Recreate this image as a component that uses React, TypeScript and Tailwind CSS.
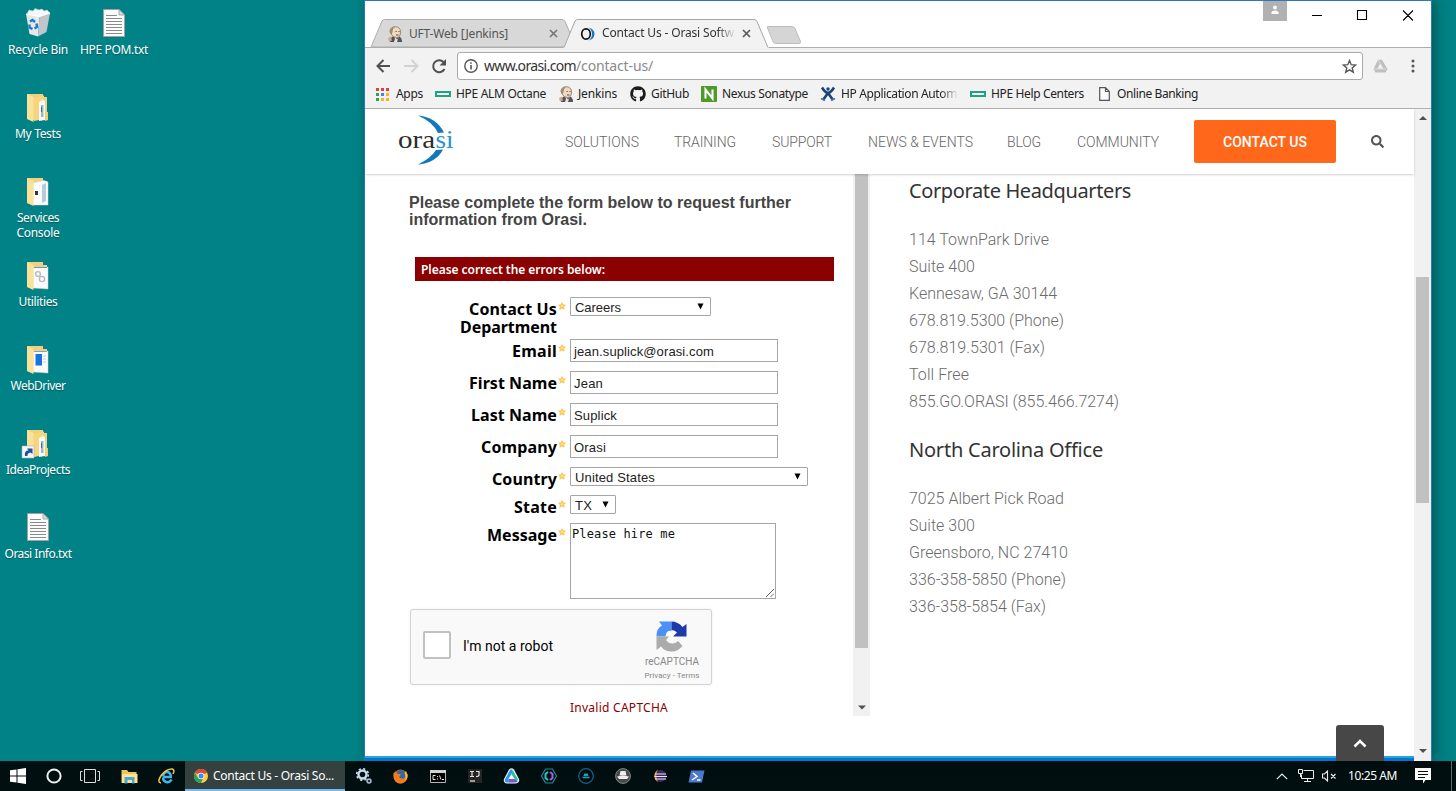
import { useLayoutEffect, useRef } from "react";
import type { ReactNode } from "react";
import { FaGithub, FaSearch } from "react-icons/fa";

/** A single line of text, tracked so that it spans exactly `w` pixels. */
function Line({ w, className = "", children }: { w: number; className?: string; children: string }) {
  const ref = useRef<HTMLSpanElement>(null);
  useLayoutEffect(() => {
    const fit = () => {
      const el = ref.current;
      if (!el) return;
      el.style.letterSpacing = "0px";
      const natural = el.getBoundingClientRect().width;
      el.style.letterSpacing = `${(w - natural) / children.length}px`;
    };
    fit();
    document.fonts.ready.then(fit);
  }, [w, children]);
  return (
    <span ref={ref} className={`inline-block whitespace-pre ${className}`}>
      {children}
    </span>
  );
}

/* ---------- desktop icons ---------- */

function TextFile() {
  return (
    <svg width="22" height="28" viewBox="0 0 22 28">
      <path d="M.5 .5H16L21.500 6V27.500H.5Z" fill="#fdfdfd" stroke="#a8a09c" />
      <path d="M16 .5V6H21.500Z" fill="#dedede" stroke="#999" strokeWidth=".8" />
      <path d="M3 6.500H14M3 9.500H19M3 12.500H19M3 15.500H19M3 18.500H19M3 21.500H19M3 24.500H19" stroke="#8a8a8a" />
    </svg>
  );
}

function RecycleBin() {
  return (
    <svg width="26" height="29" viewBox="0 0 26 29">
      <path d="M2 6L4 2L8 3L10 .5L14 2L17 1L19 3L22 2L25 5L22 9L4 10Z" fill="#f5f7f8" stroke="#c4cdd2" strokeWidth=".6" />
      <path d="M1 6L4.500 26L13 28.500L14.500 8.500Z" fill="#e4e8ea" />
      <path d="M14.500 8.500L13 28.500L21.500 24L25 5Z" fill="#bfc5ca" />
      <path d="M1 6L14.500 8.500L25 5" fill="none" stroke="#fff" strokeWidth="1.200" />
      <path d="M5 13.500L7.500 12L10 14M11.500 15.500L12 19L9.500 20.500M7.500 21L4.500 19.500L4.500 16.500" fill="none" stroke="#1f78c8" strokeWidth="2.400" />
    </svg>
  );
}

function Folder({ kind }: { kind: "files" | "console" | "gears" | "web" | "link" }) {
  return (
    <svg className="relative -left-px top-px" width="32" height="30" viewBox="0 0 32 30">
      <path d="M6 1H22V4H26V27H12L6 26Z" fill="#eed283" />
      {(kind === "files" || kind === "link") && (
        <>
          <path d="M13 5L23 2.500V26L13 28Z" fill="#f5d67c" />
          <path d="M18 9L22 7L24 8V27L18 28Z" fill="#f6fafc" />
          <path d="M20 12H22.500V24H20Z" fill="#9db9cf" />
          <path d="M20.500 14V19" stroke="#456b92" />
          <path d="M24 19H27V27L24 28Z" fill="#f2cf6d" />
        </>
      )}
      {kind === "console" && (
        <>
          <path d="M12 6L23 3.500L27 5V28H12Z" fill="#fdfdfd" stroke="#d2d2d2" strokeWidth=".5" />
          <path d="M21 8L25 6V24L21 26Z" fill="#b9cbd8" />
          <path d="M14 14H17V18H14Z" fill="#30353a" />
        </>
      )}
      {kind === "gears" && (
        <>
          <path d="M12 6H27V28L12 27Z" fill="#fafafa" stroke="#ccc" strokeWidth=".5" />
          <path d="M13 6.500H26" stroke="#7891ad" />
          <circle cx="17" cy="13" r="2.400" fill="none" stroke="#b5bbc2" strokeWidth="1.400" />
          <circle cx="21" cy="18" r="2.600" fill="none" stroke="#b5bbc2" strokeWidth="1.400" />
        </>
      )}
      {kind === "web" && (
        <>
          <path d="M12 6H27V28L12 27Z" fill="#fafafa" stroke="#ccc" strokeWidth=".5" />
          <path d="M13 6.500H26" stroke="#8ca0b4" />
          <path d="M14.500 9H21V20.500H14.500Z" fill="#1475df" />
          <path d="M22 11H25M22 14H25M22 17H25" stroke="#c5cdd6" />
        </>
      )}
      <path d="M6 1L12.500 4V29L6 26Z" fill="#fbe299" />
      {kind === "link" && (
        <>
          <path d="M1 17H13V29H1Z" fill="#f4f7fa" stroke="#a9b6c2" strokeWidth=".6" />
          <path d="M4 27Q3 21.500 7.500 21.500L6 19.500H11.500V25L9.500 23.500Q6 24 6.500 27Z" fill="#234f94" />
        </>
      )}
    </svg>
  );
}

function DesktopItem({ icon, lines }: { icon: ReactNode; lines: [string, number][] }) {
  return (
    <div className="flex h-[84px] w-[76px] flex-col items-center">
      <div className="flex h-[42px] items-center justify-center pt-[3px]">{icon}</div>
      {lines.map(([text, w]) => (
        <Line key={text} w={w} className="h-[15px] text-xs leading-[15px] text-white [text-shadow:0_1px_1px_rgba(0,0,0,0.3)]">
          {text}
        </Line>
      ))}
    </div>
  );
}

/* ---------- browser chrome ---------- */

function JenkinsIcon() {
  return (
    <svg width="16" height="16" viewBox="0 0 16 16">
      <path d="M3 16Q3 11.500 6 10.500H12Q15 11.500 15 16Z" fill="#4b535b" />
      <path d="M7 10.500L8 12.500L7 16H10L11.500 11.500Z" fill="#dfe3e4" />
      <path d="M8.500 11.500L12 12L10 13.500Z" fill="#b8413a" />
      <path d="M3 5Q3.500 .7 8.500 .7Q13.500 1 13.500 6Q13.500 11.500 9.500 11.500Q6 11.500 4.500 8.500Z" fill="#f0d9bd" stroke="#85705c" strokeWidth=".8" />
      <path d="M3 7.500Q2 1 8.500 1L6 3L5.500 6L4.500 8.500Z" fill="#9c8a79" />
      <path d="M8.500 5.500H9.700M11.500 5.500H12.500M9 9H11.500" stroke="#604c40" />
      <path d="M1 12L4 10.500L5 14.500L2 15.500Z" fill="#d0a888" />
    </svg>
  );
}

function HpeIcon() {
  return (
    <svg width="16" height="6" viewBox="0 0 16 6">
      <path d="M1 1H15V5H1Z" fill="#fff" stroke="#17a882" strokeWidth="2" />
    </svg>
  );
}

function CloseX({ color = "#6a6a6a" }: { color?: string }) {
  return (
    <svg width="9" height="9" viewBox="0 0 9 9">
      <path d="M1 1L8 8M8 1L1 8" stroke={color} strokeWidth="1.700" />
    </svg>
  );
}

function TabStrip() {
  return (
    <div className="flex h-[46px] items-start bg-white">
      <div className="relative mt-[18px] h-[28px] w-[205px] shrink-0">
        <svg className="absolute inset-0" width="205" height="28" viewBox="0 0 205 28">
          <path d="M6 28L17 2Q18 .5 19.500 .5H197Q199 .5 200 2.500L205 14V28Z" fill="#d8d8d8" stroke="#adadad" />
        </svg>
        <div className="relative flex h-full items-center pl-[22px] pt-px font-['Noto_Sans']">
          <JenkinsIcon />
          <Line w={99} className="ml-[6px] text-xs text-[#555]">UFT-Web [Jenkins]</Line>
          <span className="ml-[41px]"><CloseX color="#777" /></span>
        </div>
      </div>
      <div className="relative -ml-[7px] mt-[18px] h-[29px] w-[207px] shrink-0">
        <svg className="absolute inset-0" width="207" height="29" viewBox="0 0 207 29">
          <path d="M0 29L1 28L12 2Q13 .5 14.500 .5H191Q193 .5 194 2.500L205 28L206 29Z" fill="#f2f2f2" />
          <path d="M1 28.500L12 2Q13 .5 14.500 .5H191Q193 .5 194 2.500L205 28.500" fill="none" stroke="#a5a5a5" />
        </svg>
        <div className="relative flex h-full items-center pl-[17px] font-['Noto_Sans']">
          <svg width="16" height="16" viewBox="0 0 16 16">
            <ellipse cx="6" cy="8" rx="4.300" ry="5.200" fill="none" stroke="#111" strokeWidth="1.700" />
            <path d="M8.500 1.500Q14.500 3 14.500 8T8.500 14.500Q12 12 12 8T8.500 1.500Z" fill="#1879bf" />
          </svg>
          <div className="ml-[6px] flex w-[134px] [mask-image:linear-gradient(to_right,black_86%,transparent_100%)]">
            <Line w={132} className="-translate-y-px text-xs text-[#333]">Contact Us - Orasi Softw</Line>
          </div>
          <span className="ml-[6px]"><CloseX color="#5a5a5a" /></span>
        </div>
      </div>
      <svg className="-ml-[4px] mt-[25px] shrink-0" width="36" height="18" viewBox="0 0 36 18">
        <path d="M1.500 .5H26Q28 .5 29 2.500L34.500 15.500Q35 17.500 33 17.500H10Q8 17.500 7 15.500L1.500 2Z" fill="#d5d5d5" stroke="#bdbdbd" />
      </svg>
      <div className="ml-auto flex items-start">
        <div className="flex h-5 w-6 justify-center bg-[#b1b1b1] pt-1">
          <svg width="8" height="9" viewBox="0 0 8 9">
            <circle cx="4" cy="2.500" r="1.900" fill="#fff" />
            <path d="M.5 9V7.500Q1 5.500 4 5.500T7.500 7.500V9Z" fill="#fff" />
          </svg>
        </div>
        <svg className="ml-6 mt-[9px]" width="104" height="11" viewBox="0 0 104 11">
          <path d="M1 5.500H11M46.500 .5H55.500V9.500H46.500ZM92 .5L102 10.500M102 .5L92 10.500" fill="none" stroke="#000" strokeWidth="1.100" />
        </svg>
        <div className="w-4" />
      </div>
    </div>
  );
}

function AddressBar() {
  return (
    <div className="flex h-[36px] items-center bg-[#f2f2f2] pl-[11px]">
      <svg width="72" height="16" viewBox="0 0 72 16">
        <path d="M14 8H1M7.500 2L1.500 8L7.500 14" fill="none" stroke="#505050" strokeWidth="2" />
        <path d="M28 8H41M35.500 2L41.500 8L35.500 14" fill="none" stroke="#d2d2d2" strokeWidth="2" />
        <path d="M68.500 11A6 6 0 1 1 67.500 4" fill="none" stroke="#505050" strokeWidth="2" />
        <path d="M70 1V7.500H63.500Z" fill="#505050" />
      </svg>
      <div className="ml-[9px] flex h-[28px] w-[906px] items-center rounded-[3px] border border-[#a9a9a9] bg-white pl-[6px] pr-[5px]">
        <svg width="14" height="14" viewBox="0 0 14 14">
          <circle cx="7" cy="7" r="6.200" fill="none" stroke="#555" strokeWidth="1.400" />
          <path d="M7 6V10.500M7 3.200V4.800" stroke="#555" strokeWidth="1.600" />
        </svg>
        <Line w={92} className="ml-[6px] font-['Noto_Sans'] text-sm leading-5 text-[#333]">www.orasi.com</Line>
        <Line w={77} className="font-['Noto_Sans'] text-sm leading-5 text-[#8a8a8a]">/contact-us/</Line>
        <svg className="ml-auto" width="15" height="15" viewBox="0 0 15 15">
          <path d="M7.500 1.600L9.200 5.700L13.600 6L10.200 8.900L11.300 13.200L7.500 10.900L3.700 13.200L4.800 8.900L1.400 6L5.800 5.700Z" fill="none" stroke="#555" strokeWidth="1.400" />
        </svg>
      </div>
      <svg className="ml-[10px]" width="15" height="14" viewBox="0 0 15 14">
        <path d="M5 .8H9L14.500 10L12.500 13.500H2.500L.5 10ZM7.200 4.500L4.300 9.800H10.200Z" fill="#bfbfbf" fillRule="evenodd" />
        <path d="M5 1L10 9.500M1 10H13" stroke="#e3e3e3" strokeWidth=".8" />
      </svg>
      <svg className="ml-[23px]" width="4" height="14" viewBox="0 0 4 14">
        <circle cx="2" cy="2" r="1.500" fill="#555" />
        <circle cx="2" cy="7" r="1.500" fill="#555" />
        <circle cx="2" cy="12" r="1.500" fill="#555" />
      </svg>
    </div>
  );
}

function Bookmark({ icon, text, w, box, gap = 5 }: { icon: ReactNode; text: string; w: number; box: string; gap?: 4 | 5 | 7 }) {
  const gaps = { 4: "gap-1", 5: "gap-[5px]", 7: "gap-[7px]" };
  return (
    <div className={`flex shrink-0 items-center ${gaps[gap]} ${box}`}>
      {icon}
      <Line w={w} className="text-xs text-[#222]">{text}</Line>
    </div>
  );
}

function BookmarksBar() {
  const colors = ["#d8453c", "#d8453c", "#d8453c", "#2aa352", "#4a7ff0", "#f2b52c", "#2aa352", "#f2b52c", "#f2b52c"];
  return (
    <div className="flex h-[25px] items-center border-b border-[#b0b0b0] bg-[#f2f2f2] pb-1 pl-[11px] font-['Noto_Sans']">
      <Bookmark
        box="w-[59px]"
        gap={7}
        w={27}
        text="Apps"
        icon={
          <svg width="13" height="13" viewBox="0 0 13 13">
            {colors.map((c, i) => (
              <rect key={i} x={(i % 3) * 5} y={Math.floor(i / 3) * 5} width="3" height="3" fill={c} />
            ))}
          </svg>
        }
      />
      <Bookmark box="w-[123px]" w={90} text="HPE ALM Octane" icon={<HpeIcon />} />
      <Bookmark box="w-[72px]" gap={4} w={39} text="Jenkins" icon={<JenkinsIcon />} />
      <Bookmark box="w-[71px]" w={38} text="GitHub" icon={<FaGithub size={16} color="#1b1b1b" />} />
      <Bookmark
        box="w-[119px]"
        w={86}
        text="Nexus Sonatype"
        icon={
          <svg width="16" height="16" viewBox="0 0 16 16">
            <rect width="16" height="16" rx="1" fill="#4d9a2a" />
            <path d="M4.500 12.500V3.500L11.500 12.500V3.500" fill="none" stroke="#fff" strokeWidth="2.100" />
          </svg>
        }
      />
      <div className="w-[150px] shrink-0">
        <div className="w-[137px] [mask-image:linear-gradient(to_right,black_88%,transparent_101%)]">
          <Bookmark
            box="w-[137px]"
            w={116}
            text="HP Application Autom"
            icon={
              <svg className="shrink-0" width="16" height="16" viewBox="0 0 16 16">
                <circle cx="8" cy="3" r="1.700" fill="#1b4375" />
                <path d="M2 1.500Q5 6.500 8 7Q11 6.500 14 1.500M8 7L3 14M8 7L13 14" fill="none" stroke="#1b4375" strokeWidth="2.600" />
                <path d="M1 12.500L5 14.500M15 12.500L11 14.500" stroke="#4a78aa" strokeWidth="1.600" />
              </svg>
            }
          />
        </div>
      </div>
      <Bookmark box="w-[127px]" w={93} text="HPE Help Centers" icon={<HpeIcon />} />
      <Bookmark
        box="ml-[2px]"
        gap={7}
        w={81}
        text="Online Banking"
        icon={
          <svg width="11" height="14" viewBox="0 0 11 14">
            <path d="M.7 .7H6.500L10.300 4.500V13.300H.7ZM6.500 .7V4.500H10.300" fill="#fafafa" stroke="#555" strokeWidth="1.200" />
          </svg>
        }
      />
    </div>
  );
}

/* ---------- web page ---------- */

function SiteHeader() {
  return (
    <header className="z-10 flex h-[65px] shrink-0 items-center bg-white pl-[33px] font-['Roboto'] text-sm font-light text-[#666] shadow-[0_1px_2px_rgba(0,0,0,0.18)]">
      <svg className="-mt-[3px]" width="58" height="50" viewBox="0 0 58 50">
        <path d="M20 .5Q38 2 46 17.500L40 18Q35 7 20 .5Z" fill="#1278bd" />
        <path d="M20 49.500Q38 48 45 34.500L38 35Q33 43 20 49.500Z" fill="#1278bd" />
        <text x="0" y="33" fontFamily="Liberation Serif" fontSize="26" textLength="37" lengthAdjust="spacingAndGlyphs" fill="#2d2d2d">ora</text>
        <text x="37.500" y="33" fontFamily="Liberation Serif" fontSize="26" textLength="18" lengthAdjust="spacingAndGlyphs" fill="#2b93cd">si</text>
      </svg>
      <nav className="ml-[109px] flex">
        <Line w={74} className="mr-[35px]">SOLUTIONS</Line>
        <Line w={62} className="mr-[36px]">TRAINING</Line>
        <Line w={60} className="mr-[36px]">SUPPORT</Line>
        <Line w={105} className="mr-[34px]">{"NEWS & EVENTS"}</Line>
        <Line w={34} className="mr-[36px]">BLOG</Line>
        <Line w={82} className="mr-[35px]">COMMUNITY</Line>
      </nav>
      <div className="flex h-[43px] w-[142px] items-center justify-center rounded-[2px] bg-[#ff671b] font-medium text-white">
        <Line w={84}>CONTACT US</Line>
      </div>
      <FaSearch className="ml-[35px]" size={13} color="#555" />
    </header>
  );
}

function Star() {
  return (
    <svg className="mt-[5px] shrink-0" width="8" height="8" viewBox="0 0 8 8">
      <path d="M4 0L5.400 2.400L8 2.800L6.200 4.800L6.600 7.700L4 6.500L1.400 7.700L1.800 4.800L0 2.800L2.600 2.400Z" fill="#f9c550" />
      <circle cx="4" cy="4.200" r="1.400" fill="#ffe08a" />
    </svg>
  );
}

function Field({ labels, height, children }: { labels: [string, number][]; height: string; children: ReactNode }) {
  return (
    <div className={`flex items-start ${height}`}>
      <div className="flex w-[192px] flex-col items-end pt-[3px] font-['Noto_Sans'] text-base font-bold leading-[18px] text-black">
        {labels.map(([text, w]) => (
          <Line key={text} w={w}>{text}</Line>
        ))}
      </div>
      <div className="flex w-[13px] pl-px"><Star /></div>
      {children}
    </div>
  );
}

function TextInput({ w, children }: { w: number; children: string }) {
  return (
    <div className="flex h-[23px] w-[208px] items-center border border-[#a6a6a6] bg-white pl-[3px] pt-0.5 font-['Liberation_Sans'] text-[13px] text-[#222]">
      <Line w={w}>{children}</Line>
    </div>
  );
}

function Select({ w, box, children }: { w: number; box: string; children: string }) {
  return (
    <div className={`flex h-[19px] items-center justify-between rounded-[1px] border border-[#a6a6a6] bg-white pl-1 pr-[6px] font-['Liberation_Sans'] text-[13px] leading-[17px] text-[#222] ${box}`}>
      <Line w={w} className="pt-px">{children}</Line>
      <svg width="7" height="7" viewBox="0 0 7 7"><path d="M.5 .5H6.500L3.500 6.500Z" fill="#000" /></svg>
    </div>
  );
}

function Recaptcha() {
  return (
    <div className="ml-[45px] flex h-[76px] w-[302px] shrink-0 rounded-[3px] border border-[#d3d3d3] bg-[#f9f9f9] font-['Roboto'] shadow-[0_0_3px_rgba(0,0,0,0.08)]">
      <div className="ml-3 mt-[21px] size-7 rounded-[2px] border-2 border-[#c1c1c1] bg-white" />
      <Line w={90} className="ml-3 mt-[26px] h-5 text-sm leading-5 text-black">I'm not a robot</Line>
      <div className="ml-auto mr-[11px] flex w-[56px] flex-col items-center pt-[11px]">
        <svg className="-ml-px" width="31" height="31" viewBox="0 0 31 31">
          <path d="M.5 15.500Q.5 7 6 4.500L3 .5H15.500V10Q10 9 9.500 15.500Z" fill="#4a90f5" />
          <path d="M15.500 .5Q22 .5 26.500 6L30.500 3V15.500H17L21 11.500Q19 9 15.500 9Z" fill="#1c3aa9" />
          <path d="M.5 15.500H13L10 19Q13 23 17 22.500Q20 22 22 20L26.500 25Q22 30.500 15.500 30.500Q8.500 30.500 5 25.500L.5 29Z" fill="#ababab" />
        </svg>
        <Line w={54} className="mt-[3px] text-[10px] leading-[13px] text-[#888]">reCAPTCHA</Line>
        <Line w={55} className="mt-[3px] text-[8px] leading-[10px] text-[#888]">Privacy - Terms</Line>
      </div>
    </div>
  );
}

function ContactForm() {
  return (
    <section className="flex h-[542px] w-[505px] shrink-0">
      <div className="flex w-[488px] flex-col">
        <div className="ml-[44px] mt-5 flex flex-col items-start font-['Liberation_Sans'] text-base font-bold leading-[17px] text-[#444]">
          <Line w={382}>Please complete the form below to request further</Line>
          <Line w={178}>information from Orasi.</Line>
        </div>
        <div className="ml-[50px] mt-[29px] flex h-6 w-[419px] shrink-0 items-center bg-[#8b0000] pl-[6px] pt-0.5 font-['Noto_Sans'] text-xs font-semibold text-white">
          <Line w={184}>Please correct the errors below:</Line>
        </div>
        <div className="mt-4 h-[312px] shrink-0">
          <Field height="h-[42px]" labels={[["Contact Us", 88], ["Department", 97]]}>
            <Select w={46} box="w-[141px]">Careers</Select>
          </Field>
          <Field height="h-8" labels={[["Email", 45]]}><TextInput w={140}>jean.suplick@orasi.com</TextInput></Field>
          <Field height="h-8" labels={[["First Name", 88]]}><TextInput w={29}>Jean</TextInput></Field>
          <Field height="h-8" labels={[["Last Name", 86]]}><TextInput w={43}>Suplick</TextInput></Field>
          <Field height="h-8" labels={[["Company", 76]]}><TextInput w={32}>Orasi</TextInput></Field>
          <Field height="h-7" labels={[["Country", 65]]}><Select w={80} box="w-[238px]">United States</Select></Field>
          <Field height="h-7" labels={[["State", 43]]}><Select w={17} box="w-[46px]">TX</Select></Field>
          <Field height="h-[86px]" labels={[["Message", 70]]}>
            <div className="flex h-[76px] w-[206px] justify-between border border-[#a6a6a6] bg-white pl-px pt-[3px] font-['DejaVu_Sans_Mono'] text-xs leading-[15px] text-[#111]">
              <Line w={103}>Please hire me</Line>
              <svg className="mb-px mr-px self-end" width="8" height="8" viewBox="0 0 8 8"><path d="M0 8L8 0M4.500 8L8 4.500" stroke="#666" /></svg>
            </div>
          </Field>
        </div>
        <Recaptcha />
        <Line w={98} className="ml-[205px] mt-[14px] h-[18px] shrink-0 self-start font-['Noto_Sans'] text-xs leading-[18px] text-[#8b0000]">Invalid CAPTCHA</Line>
      </div>
      <div className="flex w-[17px] flex-col items-center justify-between bg-[#f1f1f1]">
        <div className="h-[474px] w-[13px] bg-[#c1c1c1]" />
        <svg className="mb-[6px]" width="8" height="5" viewBox="0 0 8 5"><path d="M0 .5H8L4 4.500Z" fill="#505050" /></svg>
      </div>
    </section>
  );
}

function Office({ title, titleWidth, lines }: { title: string; titleWidth: number; lines: [string, number][] }) {
  return (
    <div className="flex flex-col items-start">
      <Line w={titleWidth} className="mb-[22px] h-[27px] font-['Noto_Sans'] text-[20px] font-normal leading-[27px] text-[#333]">{title}</Line>
      {lines.map(([text, w]) => (
        <Line key={text} w={w} className="h-[27px] leading-[27px]">{text}</Line>
      ))}
    </div>
  );
}

function Page() {
  return (
    <div className="relative flex min-h-0 flex-1">
      <div className="flex w-[1049px] flex-col bg-white">
        <SiteHeader />
        <div className="flex min-h-0 flex-1">
          <ContactForm />
          <section className="ml-[39px] flex flex-col gap-[21px] pt-[3px] font-['Roboto'] text-base font-light text-[#6b6b6b]">
            <Office
              title="Corporate Headquarters"
              titleWidth={222}
              lines={[["114 TownPark Drive", 140], ["Suite 400", 66], ["Kennesaw, GA 30144", 148], ["678.819.5300 (Phone)", 155], ["678.819.5301 (Fax)", 136], ["Toll Free", 60], ["855.GO.ORASI (855.466.7274)", 210]]}
            />
            <Office
              title="North Carolina Office"
              titleWidth={194}
              lines={[["7025 Albert Pick Road", 155], ["Suite 300", 66], ["Greensboro, NC 27410", 159], ["336-358-5850 (Phone)", 157], ["336-358-5854 (Fax)", 137]]}
            />
          </section>
        </div>
        <div className="h-[5px] shrink-0 border-t-2 border-[#2d9fe3] bg-[#0078d0]" />
      </div>
      <div className="flex w-[17px] flex-col items-center bg-[#f1f1f1]">
        <svg className="mt-[7px]" width="8" height="4" viewBox="0 0 8 4"><path d="M0 4H8L4 0Z" fill="#505050" /></svg>
        <div className="mt-[157px] h-[226px] w-[13px] bg-[#c1c1c1]" />
        <svg className="mb-2 mt-auto" width="8" height="4" viewBox="0 0 8 4"><path d="M0 0H8L4 4Z" fill="#505050" /></svg>
      </div>
      <div className="absolute bottom-0 right-[47px] flex h-[36px] w-12 items-center justify-center rounded-t-[3px] bg-[#474747]">
        <svg width="14" height="9" viewBox="0 0 14 9"><path d="M1.500 7.500L7 2L12.500 7.500" fill="none" stroke="#fff" strokeWidth="2.500" /></svg>
      </div>
    </div>
  );
}

/* ---------- taskbar ---------- */

function ChromeIcon() {
  return (
    <svg className="shrink-0" width="14" height="14" viewBox="0 0 14 14">
      <circle cx="7" cy="7" r="7" fill="#ffcf3f" />
      <path d="M7 7L.9 3.500A7 7 0 0 1 13.100 3.500Z" fill="#e2453a" />
      <path d="M.9 3.500A7 7 0 0 0 7 14L9.500 8.500L4 8.500Z" fill="#30a152" />
      <circle cx="7" cy="7" r="3.300" fill="#fff" />
      <circle cx="7" cy="7" r="2.500" fill="#4285f4" />
    </svg>
  );
}

const pinned: ReactNode[] = [
  <svg key="gears" width="16" height="16" viewBox="0 0 16 16">
    <circle cx="6.500" cy="6.500" r="4" fill="none" stroke="#c6dceb" strokeWidth="2.400" />
    <circle cx="6.500" cy="6.500" r="5.800" fill="none" stroke="#c6dceb" strokeWidth="1.600" strokeDasharray="2.200 2.350" />
    <circle cx="13" cy="13" r="1.900" fill="none" stroke="#9eb6c8" strokeWidth="1.700" />
  </svg>,
  <svg key="fox" width="15" height="15" viewBox="0 0 15 15">
    <circle cx="7.500" cy="7.500" r="7" fill="#e65c17" />
    <circle cx="8" cy="6" r="4.800" fill="#2c6ba9" />
    <path d="M.5 4L3 2.500L4 4.500L8 5.500L6 8Q8 10.500 12 9L14.500 4.500Q15.500 10 11.500 13T3 13Q0 10 .5 4Z" fill="#f27c1d" />
    <path d="M13 2Q16 8 12 12Q13.500 7 11.500 4Z" fill="#f9c33d" />
  </svg>,
  <svg key="cmd" width="16" height="13" viewBox="0 0 16 13">
    <path d="M.5 .5H15.500V12.500H.5Z" fill="#000" stroke="#b4b4b4" />
    <path d="M0 0H16V3H0Z" fill="#d5d5d5" />
    <path d="M5.500 5.500H3V9.500H5.500M7 6.500H8M7 9H8M9.500 5.500L11 9.500M12 9.500H14" fill="none" stroke="#e7e7e7" />
  </svg>,
  <svg key="ij" width="14" height="14" viewBox="0 0 14 14">
    <rect width="14" height="14" fill="#252525" />
    <path d="M2 2.500H6M4 2V7M2 7.500H6M8 2.500H11V6Q11 7.500 8 7.500" fill="none" stroke="#e8e8e8" strokeWidth="1.200" />
    <path d="M2 12H7" stroke="#eee" strokeWidth="1.200" />
  </svg>,
  <svg key="tri" width="17" height="16" viewBox="0 0 17 16">
    <path d="M6 1.500Q8.500 -1 11 1.500L16 11Q17 14.500 13 15.500H4Q0 15 1 11Z" fill="#e9f3ff" />
    <path d="M7 2.200Q8.500 1 9.500 2L8.500 6L5.500 10.500L6 14.500H4Q1 14 2 11.500Z" fill="#2698e4" />
    <path d="M9.500 2L15 11.500L14 13.500L11 10L8.500 6Z" fill="#28bfa0" />
    <path d="M5.500 11H11.500L14.500 13Q14 14.500 12.500 14.500H6Z" fill="#7b59c9" />
    <path d="M8.500 7L6.500 10.500H10.500Z" fill="#fff" />
  </svg>,
  <svg key="hex" width="16" height="16" viewBox="0 0 16 16">
    <path d="M4.500 1H11.500L15.500 8L11.500 15H4.500L.5 8Z" fill="none" stroke="#188f9a" strokeWidth="1.200" />
    <path d="M7 4L4.500 6V10L7 12" fill="none" stroke="#2cc7be" strokeWidth="2" />
    <path d="M9 4L11.500 6V10L9 12" fill="none" stroke="#a45fda" strokeWidth="2" />
  </svg>,
  <svg key="hat1" width="16" height="16" viewBox="0 0 16 16">
    <circle cx="8" cy="8" r="7.300" fill="none" stroke="#14688d" strokeWidth="1.200" />
    <path d="M5.500 8L6.200 5.500H9.800L10.500 8ZM4 8.800H12L11 10.300H5Z" fill="#289bc5" />
  </svg>,
  <svg key="hat2" width="16" height="16" viewBox="0 0 16 16">
    <circle cx="8" cy="8" r="7.400" fill="#424a4d" stroke="#838989" />
    <path d="M4.500 7.500L5.500 3H10.500L11.500 7.500ZM2 8.500Q8 7 14 8.500L12 11H4Z" fill="#efefef" />
  </svg>,
  <svg key="eclipse" width="14" height="14" viewBox="0 0 14 14">
    <circle cx="7.500" cy="7" r="6" fill="#3a2b63" />
    <path d="M5 .5Q-2.500 6.500 5 13.500Q1.500 7 5 .5Z" fill="#eb8d2c" />
    <path d="M2 5H13M1.500 7.500H14M2 10H13" stroke="#ece5f5" strokeWidth="1.100" />
  </svg>,
  <svg key="ps" width="17" height="13" viewBox="0 0 17 13">
    <path d="M3 .5H16.500L14 12.500H.5Z" fill="#4c79cf" />
    <path d="M5 3L9 6.500L4 10M9 10H12.500" fill="none" stroke="#fff" strokeWidth="1.500" />
  </svg>,
];

function Taskbar() {
  return (
    <footer className="flex h-[30px] items-center bg-[#020f10]">
      <div className="flex w-9 justify-center">
        <svg width="16" height="16" viewBox="0 0 16 16"><path d="M0 2.300L6.500 1.400V7.500H0ZM7.500 1.200L16 0V7.500H7.500ZM0 8.500H6.500V14.600L0 13.700ZM7.500 8.500H16V16L7.500 14.800Z" fill="#fff" /></svg>
      </div>
      <div className="flex w-9 justify-center">
        <svg width="16" height="16" viewBox="0 0 16 16"><circle cx="8" cy="8" r="6.600" fill="none" stroke="#eee" strokeWidth="2" /></svg>
      </div>
      <div className="flex w-9 justify-center">
        <svg width="20" height="14" viewBox="0 0 20 14"><path d="M4.500 .5H15.500V13.500H4.500ZM2.500 2.500H.5V11.500H2.500M17.500 2.500H19.500V11.500H17.500" fill="none" stroke="#ddd" /></svg>
      </div>
      <div className="flex w-[41px] justify-center pl-px">
        <svg width="17" height="15" viewBox="0 0 17 15">
          <path d="M.5 1H6L7.500 3H15.500V14H.5Z" fill="#edc45d" />
          <path d="M1 5H16.500V14H1Z" fill="#ffe391" />
          <path d="M3.500 8H13.500V14.500H11V11H6.500V14.500H3.500Z" fill="#47a7d8" />
        </svg>
      </div>
      <div className="flex w-[36px] justify-center pr-0.5">
        <svg width="17" height="16" viewBox="0 0 17 16">
          <path d="M14 9H5M5 8.500Q5.500 4 9 4T13 8.500M13.500 11.500Q12 14.500 9 14.200Q5 13.500 5 9.500" fill="none" stroke="#3db6ed" strokeWidth="2.400" />
          <path d="M3 15Q-1.500 14 3.500 7Q9 .5 14.500 1Q17 2 15 6" fill="none" stroke="#f6c53f" strokeWidth="1.500" />
        </svg>
      </div>
      <div className="flex h-full w-[160px] items-center border-b-2 border-[#76b9ed] bg-[#354141] pl-[9px] pt-0.5">
        <ChromeIcon />
        <Line w={121} className="ml-[5px] font-['Noto_Sans'] text-xs text-white">Contact Us - Orasi So...</Line>
      </div>
      {pinned.map((icon, i) => (
        <div key={i} className="flex w-[37px] items-center justify-center">{icon}</div>
      ))}
      <div className="ml-auto flex h-full items-center">
        <svg width="12" height="7" viewBox="0 0 12 7"><path d="M.8 6.200L6 1L11.200 6.200" fill="none" stroke="#eee" strokeWidth="1.200" /></svg>
        <svg className="ml-[10px]" width="17" height="14" viewBox="0 0 17 14">
          <path d="M5.500 1.500H15.500V9.500H3.500V5.500M9.500 9.500V12.500M6 12.500H13M.5 .5H4.500V4.500H.5ZM2.500 4.500V8" fill="none" stroke="#eee" />
        </svg>
        <svg className="ml-[7px]" width="15" height="12" viewBox="0 0 15 12">
          <path d="M.5 4H2.500L5.500 1V11L2.500 8H.5ZM9 4L13.500 8.500M13.500 4L9 8.500" fill="none" stroke="#eee" strokeWidth="1.100" />
        </svg>
        <Line w={49} className="ml-[11px] font-['Noto_Sans'] text-xs text-white">10:25 AM</Line>
        <svg className="ml-[18px]" width="16" height="16" viewBox="0 0 16 16">
          <path d="M0 0H16V12H10.500L8 15.500V12H0Z" fill="#fff" />
          <path d="M3 3.500H13M3 6.500H13M3 9.500H10" stroke="#020f10" />
        </svg>
        <div className="ml-5 mr-1 h-full w-px bg-[#5f696a]" />
      </div>
    </footer>
  );
}

export default function App() {
  return (
    <div className="flex h-[791px] w-[1456px] flex-col overflow-hidden bg-[#008286] font-['Noto_Sans',sans-serif]">
      <main className="relative h-[761px]">
        <div className="flex">
          <div className="flex flex-col">
            <DesktopItem icon={<RecycleBin />} lines={[["Recycle Bin", 60]]} />
            <DesktopItem icon={<Folder kind="files" />} lines={[["My Tests", 46]]} />
            <DesktopItem icon={<Folder kind="console" />} lines={[["Services", 42], ["Console", 43]]} />
            <DesktopItem icon={<Folder kind="gears" />} lines={[["Utilities", 39]]} />
            <DesktopItem icon={<Folder kind="web" />} lines={[["WebDriver", 55]]} />
            <DesktopItem icon={<Folder kind="link" />} lines={[["IdeaProjects", 64]]} />
            <DesktopItem icon={<TextFile />} lines={[["Orasi Info.txt", 67]]} />
          </div>
          <DesktopItem icon={<TextFile />} lines={[["HPE POM.txt", 68]]} />
        </div>
        <div className="absolute left-[364px] top-0 flex h-[761px] w-[1068px] flex-col border-x border-t border-[#2d78b8] bg-white shadow-[3px_0_12px_rgba(0,0,0,0.35)]">
          <TabStrip />
          <div className="flex flex-col border-t border-[#adadad]">
            <AddressBar />
            <BookmarksBar />
          </div>
          <Page />
        </div>
      </main>
      <Taskbar />
    </div>
  );
}
